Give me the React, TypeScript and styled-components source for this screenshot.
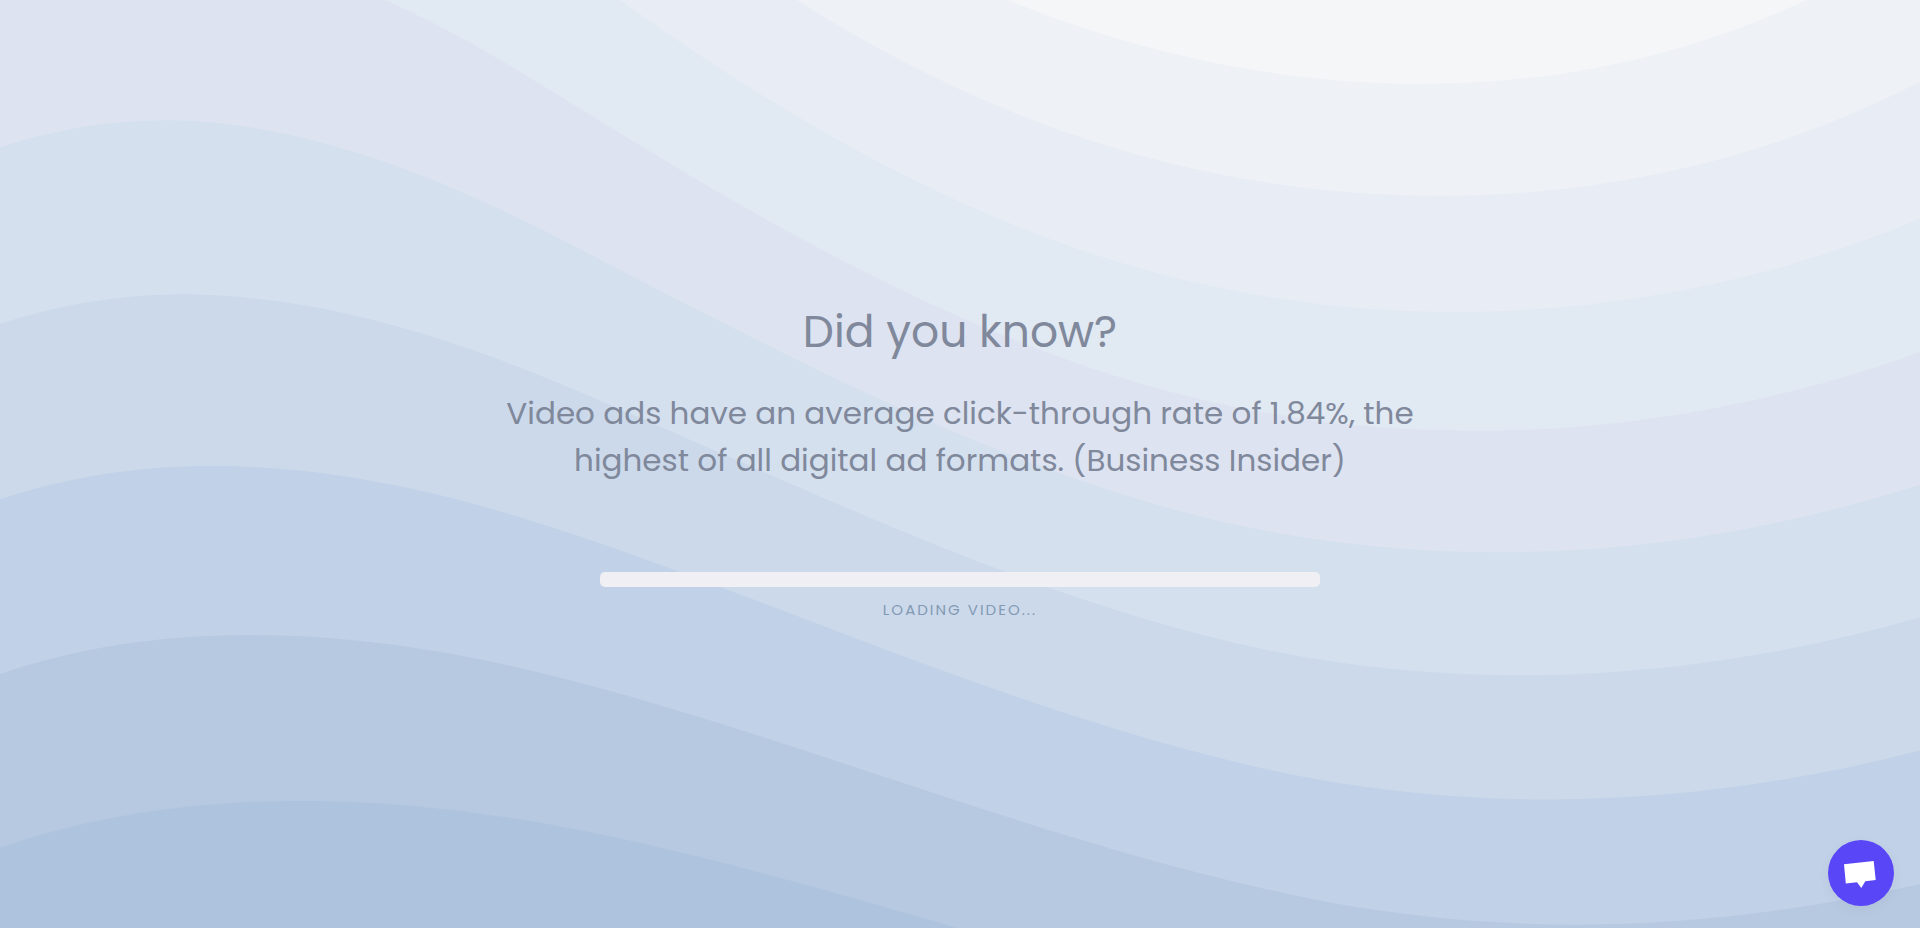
import React from "react";
import styled, { createGlobalStyle } from "styled-components";

const GlobalStyle = createGlobalStyle`
  *, *::before, *::after { box-sizing: border-box; }
  body {
    margin: 0;
    font-family: Poppins, Inter, sans-serif;
    background: #adc3de;
  }
`;

const Page = styled.main`
  position: relative;
  isolation: isolate;
  min-height: 100vh;
  display: flex;
  flex-direction: column;
  align-items: center;
  justify-content: center;
  padding: 18px 24px 24px;
  overflow: hidden;
`;

const Backdrop = styled.svg`
  position: absolute;
  inset: 0;
  z-index: -1;
  width: 100%;
  height: 100%;
`;

const Fact = styled.section`
  width: 100%;
  max-width: 960px;
  text-align: center;
  color: #80889b;
`;

const Title = styled.h1`
  margin: 0 0 26px;
  font-size: 44px;
  font-weight: 400;
  line-height: 64px;
`;

const FactText = styled.p`
  margin: 0;
  font-size: 31px;
  line-height: 47px;
`;

const Loader = styled.div`
  width: 100%;
  max-width: 720px;
  margin-top: 88px;
  display: flex;
  flex-direction: column;
  align-items: center;
  gap: 11px;
`;

const Progress = styled.progress`
  appearance: none;
  display: block;
  width: 100%;
  height: 15px;
  border: 0;
  border-radius: 5px;
  overflow: hidden;
  background: #efeff4;

  &::-webkit-progress-bar { background: #efeff4; }
  &::-webkit-progress-value { background: #5946f6; }
`;

const LoaderLabel = styled.label`
  font-size: 15px;
  line-height: 24px;
  letter-spacing: 2px;
  text-transform: uppercase;
  color: #829ab4;
`;

const ChatButton = styled.button`
  position: fixed;
  right: 26px;
  bottom: 22px;
  width: 66px;
  height: 66px;
  padding: 0;
  border: 0;
  border-radius: 50%;
  background: #5946f6;
  box-shadow: 0 4px 12px rgba(60, 80, 120, 0.06);
  cursor: pointer;

  svg { display: block; }
`;

const waves = [
  { fill: "#b7c9e1", d: "M1600 0H0v719.8c49-16.8 99.5-27.8 150.7-33.5c111.9-12.7 226-2.4 335.3 19.4c3.4 0.7 6.8 1.4 10.2 2c116.8 24 231.7 59 347.6 92.2H1600V0z" },
  { fill: "#c1d1e7", d: "M478.4 581c3.2 0.8 6.4 1.7 9.5 2.5c196.2 52.5 388.7 133.5 593.5 176.6c174.2 36.6 349.5 29.2 518.6-10.2V0H0v574.9c52.3-17.6 106.5-27.7 161.1-30.9C268.4 537.4 375.7 554.2 478.4 581z" },
  { fill: "#ccd9ea", d: "M0 0v429.4c55.6-18.4 113.5-27.3 171.4-27.7c102.8-0.8 203.2 22.7 299.3 54.5c3 1 5.9 2 8.9 3c183.6 62 365.7 146.1 562.4 192.1c186.7 43.7 376.3 34.4 557.9-12.6V0H0z" },
  { fill: "#d4e0ee", d: "M181.8 259.4c98.2 6 191.9 35.2 281.3 72.1c2.8 1.1 5.5 2.3 8.3 3.4c171 71.6 342.7 158.5 531.3 207.7c198.8 51.8 403.4 40.8 597.3-14.8V0H0v283.2C59 263.6 120.6 255.7 181.8 259.4z" },
  { fill: "#dde3f0", d: "M1600 0H0v136.3c62.3-20.9 127.7-27.5 192.2-19.2c93.6 12.1 180.5 47.7 263.3 89.6c2.6 1.3 5.1 2.6 7.7 3.9c158.4 81.1 319.7 170.9 500.3 223.2c210.5 61 430.8 49 636.6-16.6V0z" },
  { fill: "#e1e9f3", d: "M454.9 86.3C600.7 177 751.6 269.3 924.1 325c208.6 67.4 431.3 60.8 637.9-5.3c12.8-4.1 25.4-8.4 38.1-12.9V0H288.1c56 21.3 108.7 50.6 159.7 82C450.2 83.4 452.5 84.9 454.9 86.3z" },
  { fill: "#e8ecf4", d: "M1600 0H498c118.1 85.8 243.5 164.5 386.8 216.2c191.8 69.2 400 74.7 595 21.1c40.8-11.2 81.1-25.2 120.3-41.7V0z" },
  { fill: "#eef1f6", d: "M1397.5 154.8c47.2-10.6 93.6-25.3 138.6-43.8c21.7-8.9 43-18.8 63.9-29.5V0H643.4c62.9 41.7 129.7 78.2 202.1 107.4C1020.4 178.1 1214.2 196.1 1397.5 154.8z" },
  { fill: "#f5f6f8", d: "M1315.3 72.4c75.3-12.6 148.9-37.1 216.8-72.4h-723C966.8 71 1144.7 101 1315.3 72.4z" },
];

export default function App() {
  return (
    <>
      <GlobalStyle />
      <Page>
        <Backdrop viewBox="0 0 1600 800" preserveAspectRatio="xMidYMid slice" aria-hidden="true">
          {waves.map((wave) => (
            <path key={wave.fill} fill={wave.fill} d={wave.d} />
          ))}
        </Backdrop>
        <Fact>
          <Title>Did you know?</Title>
          <FactText>
            Video ads have an average click-through rate of 1.84%, the highest of all digital ad
            formats. (Business Insider)
          </FactText>
        </Fact>
        <Loader>
          <Progress id="video-progress" value={0} max={100} />
          <LoaderLabel htmlFor="video-progress">Loading video...</LoaderLabel>
        </Loader>
        <ChatButton type="button" aria-label="Open chat">
          <svg width="66" height="66" viewBox="0 0 66 66" aria-hidden="true">
            <path fill="#fff" d="M16 24.3L45.7 21L47.7 40L37.3 41.2L33.3 48L29 42.2L17.8 43.6Z" />
          </svg>
        </ChatButton>
      </Page>
    </>
  );
}
